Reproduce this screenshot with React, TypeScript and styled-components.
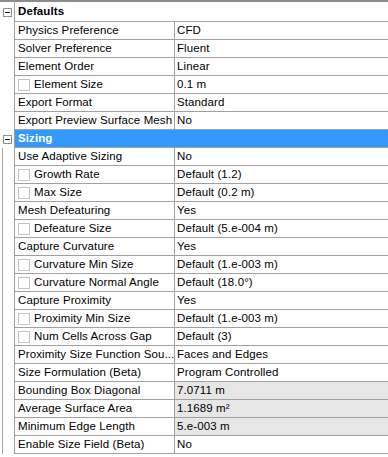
import React from 'react'
import styled, { createGlobalStyle } from 'styled-components'

const GlobalStyle = createGlobalStyle`
  body {
    margin: 0;
    background: #fff;
    font-family: "Liberation Sans", Arial, sans-serif;
    font-size: 11.5px;
    letter-spacing: 0.1px;
    color: #000;
  }
`

const Panel = styled.div`
  width: 388px;
  height: 457px;
  overflow: hidden;
  border-top: 2px solid #8c8c8c;
  box-sizing: border-box;
`

const Row = styled.div<{ $tall?: boolean }>`
  display: grid;
  grid-template-columns: 14px 160px 1fr;
  height: ${p => (p.$tall ? 20 : 18)}px;
`

const Gutter = styled.div<{ $tree?: boolean }>`
  display: flex;
  align-items: center;
  padding-left: ${p => (p.$tree ? '0' : '3px')};
  box-sizing: border-box;
  height: 100%;
  border-left: ${p => (p.$tree ? '1px solid #a8a8a8' : 'none')};
  margin-left: ${p => (p.$tree ? '2px' : '0')};
`

const Toggle = styled.span`
  width: 9px;
  height: 9px;
  box-sizing: border-box;
  border: 1px solid #8e8e8e;
  background: #fff;
  display: flex;
  align-items: center;
  justify-content: center;
  &::after {
    content: '';
    width: 5px;
    height: 1px;
    background: #000;
  }
`

const Cell = styled.div`
  border-left: 1px solid #a0a0a0;
  border-bottom: 1px solid #a0a0a0;
  height: 100%;
  box-sizing: border-box;
  white-space: nowrap;
  overflow: hidden;
  line-height: 17px;
`

const Label = styled(Cell)`
  display: flex;
  align-items: center;
  padding-left: 3px;
`

const Value = styled(Cell)<{ $readonly?: boolean }>`
  padding-left: 2px;
  background: ${p => (p.$readonly ? '#e6e6e6' : '#fff')};
`

const Header = styled(Cell)<{ $selected?: boolean; $tall?: boolean }>`
  grid-column: 2 / 4;
  line-height: ${p => (p.$tall ? 19 : 17)}px;
  padding-left: 3px;
  font-weight: bold;
  background: ${p => (p.$selected ? '#3399ff' : '#fff')};
  color: ${p => (p.$selected ? '#fff' : '#000')};
`

const Check = styled.span`
  width: 12px;
  height: 12px;
  box-sizing: border-box;
  border: 1px solid #c4c4c4;
  background: #fff;
  margin-right: 4px;
  flex: none;
`

type Prop = { label: string; value: string; check?: boolean; readonly?: boolean }

const defaults: Prop[] = [
  { label: 'Physics Preference', value: 'CFD' },
  { label: 'Solver Preference', value: 'Fluent' },
  { label: 'Element Order', value: 'Linear' },
  { label: 'Element Size', value: '0.1 m', check: true },
  { label: 'Export Format', value: 'Standard' },
  { label: 'Export Preview Surface Mesh', value: 'No' },
]

const sizing: Prop[] = [
  { label: 'Use Adaptive Sizing', value: 'No' },
  { label: 'Growth Rate', value: 'Default (1.2)', check: true },
  { label: 'Max Size', value: 'Default (0.2 m)', check: true },
  { label: 'Mesh Defeaturing', value: 'Yes' },
  { label: 'Defeature Size', value: 'Default (5.e-004 m)', check: true },
  { label: 'Capture Curvature', value: 'Yes' },
  { label: 'Curvature Min Size', value: 'Default (1.e-003 m)', check: true },
  { label: 'Curvature Normal Angle', value: 'Default (18.0°)', check: true },
  { label: 'Capture Proximity', value: 'Yes' },
  { label: 'Proximity Min Size', value: 'Default (1.e-003 m)', check: true },
  { label: 'Num Cells Across Gap', value: 'Default (3)', check: true },
  { label: 'Proximity Size Function Sou...', value: 'Faces and Edges' },
  { label: 'Size Formulation (Beta)', value: 'Program Controlled' },
  { label: 'Bounding Box Diagonal', value: '7.0711 m', readonly: true },
  { label: 'Average Surface Area', value: '1.1689 m²', readonly: true },
  { label: 'Minimum Edge Length', value: '5.e-003 m', readonly: true },
  { label: 'Enable Size Field (Beta)', value: 'No' },
]

const PropRow = ({ item, tree }: { item: Prop; tree?: boolean }) => (
  <Row>
    <Gutter $tree={tree} />
    <Label>
      {item.check && <Check />}
      {item.label}
    </Label>
    <Value $readonly={item.readonly}>{item.value}</Value>
  </Row>
)

const App = () => (
  <>
    <GlobalStyle />
    <Panel>
      <Row $tall>
        <Gutter><Toggle /></Gutter>
        <Header $tall>Defaults</Header>
      </Row>
      {defaults.map(d => <PropRow key={d.label} item={d} />)}
      <Row>
        <Gutter><Toggle /></Gutter>
        <Header $selected>Sizing</Header>
      </Row>
      {sizing.map(d => <PropRow key={d.label} item={d} tree />)}
    </Panel>
  </>
)

export default App
